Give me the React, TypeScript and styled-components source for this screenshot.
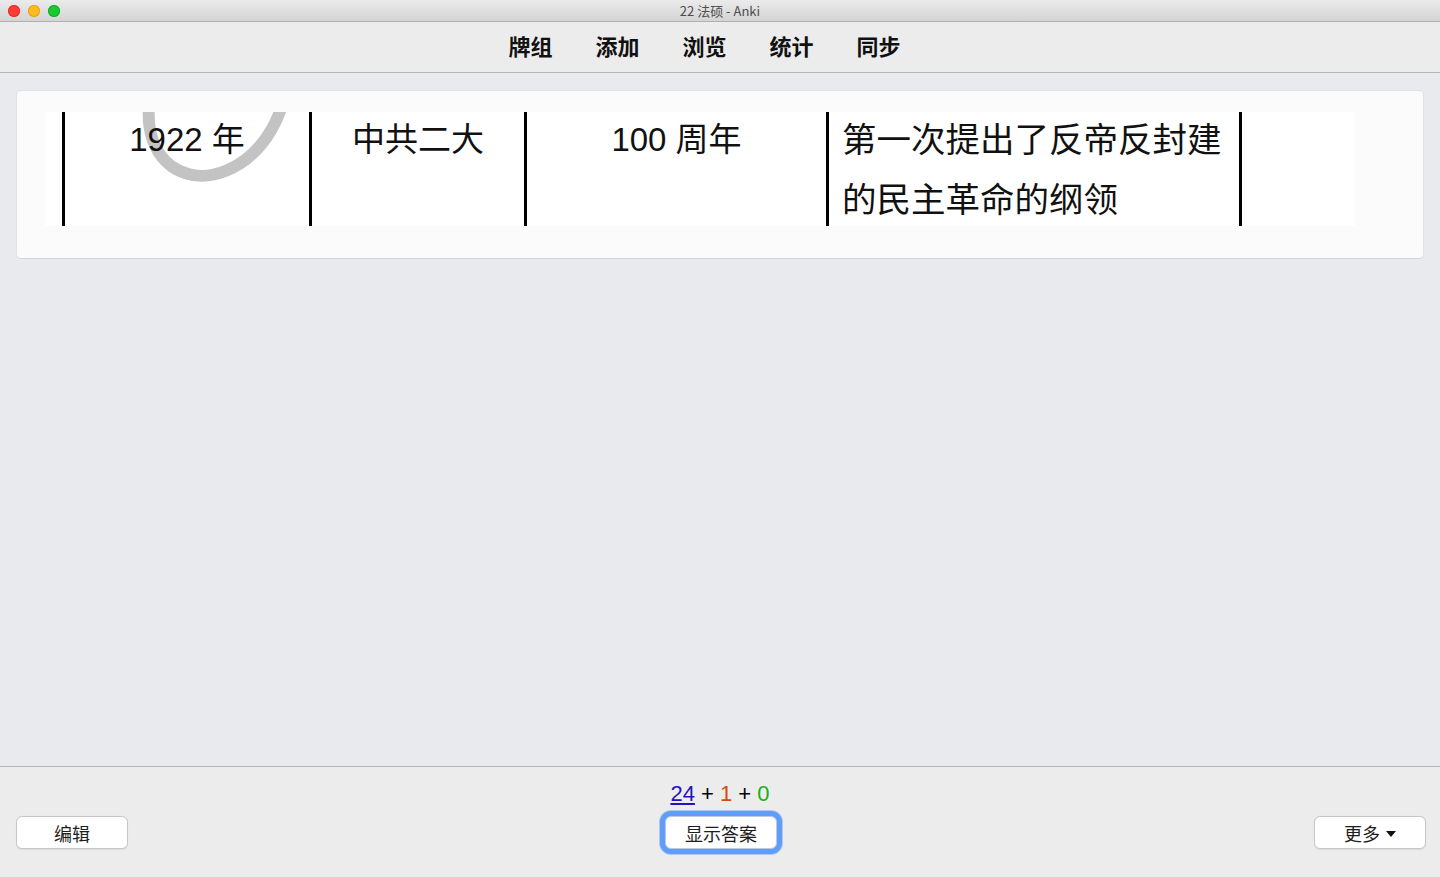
import React from "react";
import styled, { createGlobalStyle } from "styled-components";

const Global = createGlobalStyle`
  html, body { margin: 0; padding: 0; overflow: hidden; }
  body { font-family: "Noto Sans CJK SC", "Liberation Sans", sans-serif; }
  * { box-sizing: border-box; }
`;

const Window = styled.div`
  width: 1440px;
  height: 877px;
  display: flex;
  flex-direction: column;
  background: #ececec;
  font-family: "Noto Sans CJK SC", "Liberation Sans", sans-serif;
`;

const TitleBar = styled.div`
  height: 22px;
  flex: none;
  border-bottom: 1px solid #b0b0b0;
  background: linear-gradient(#ebebeb, #d4d4d4);
  display: grid;
  grid-template-columns: 1fr auto 1fr;
  align-items: center;
  padding: 0 8px;
`;

const Lights = styled.div`
  display: flex;
  gap: 8px;
  align-items: center;
`;

const Light = styled.span<{ $c: string; $b: string }>`
  width: 12px;
  height: 12px;
  border-radius: 50%;
  background: ${(p) => p.$c};
  box-shadow: inset 0 0 0 1px ${(p) => p.$b};
`;

const Title = styled.div`
  font-size: 13px;
  line-height: 21px;
  color: #4d4d4d;
`;

const Toolbar = styled.nav`
  height: 51px;
  flex: none;
  border-bottom: 1px solid #b5b5b5;
  display: flex;
  justify-content: center;
  align-items: center;
  gap: 43px;
  padding: 0 31px 4px 0;
`;

const NavItem = styled.span`
  font-size: 22px;
  font-weight: 700;
  line-height: 1;
  color: #111;
`;

const Main = styled.main`
  flex: 1;
  background: #e9eaed;
  padding: 17px 16px 0 16px;
`;

const Card = styled.section`
  background: #fbfbfb;
  border: 1px solid #e1e1e4;
  border-bottom-color: #d4d4d7;
  border-radius: 5px;
  padding: 21px 0 32px 28px;
`;

const CardImage = styled.div`
  width: 1310px;
  height: 114px;
  background: #ffffff;
  display: flex;
  padding-left: 17px;
  overflow: hidden;
`;

const Cell = styled.div<{ $w: number; $align: string; $size: number; $last?: boolean }>`
  position: relative;
  width: ${(p) => p.$w}px;
  height: 114px;
  flex: none;
  border-left: 3px solid #000;
  border-right: ${(p) => (p.$last ? "3px solid #000" : "none")};
  text-align: ${(p) => p.$align};
  padding-left: ${(p) => (p.$align === "left" ? 13 : 0)}px;
  font-family: "Liberation Sans", "Noto Sans CJK SC", sans-serif;
  font-size: ${(p) => p.$size}px;
  line-height: 60px;
  color: #111;
`;

const CellText = styled.div`
  position: relative;
  z-index: 1;
  margin-top: -2px;
`;

const Watermark = styled.svg`
  position: absolute;
  left: 0;
  top: 0;
  z-index: 0;
`;

const BottomBar = styled.footer`
  height: 111px;
  flex: none;
  border-top: 1px solid #b5b5b5;
  background: #ececec;
  display: grid;
  grid-template-columns: 1fr auto 1fr;
  align-items: end;
  padding: 0 14px 28px 16px;
`;

const Side = styled.div<{ $end?: boolean }>`
  display: flex;
  justify-content: ${(p) => (p.$end ? "flex-end" : "flex-start")};
`;

const Center = styled.div`
  display: flex;
  flex-direction: column;
  align-items: center;
  gap: 9px;
`;

const Counts = styled.div`
  font-family: "Liberation Sans", sans-serif;
  font-size: 22px;
  line-height: 26px;
  color: #000;
  white-space: pre;
  margin-right: 2px;
`;

const Count = styled.span<{ $color: string; $link?: boolean }>`
  color: ${(p) => p.$color};
  text-decoration: ${(p) => (p.$link ? "underline" : "none")};
  text-underline-offset: 2px;
`;

const Button = styled.button<{ $focus?: boolean }>`
  width: 112px;
  height: 33px;
  background: #fff;
  border: 1px solid ${(p) => (p.$focus ? "#b9c9e6" : "#c7c7c7")};
  border-radius: 6px;
  font-family: "Noto Sans CJK SC", sans-serif;
  font-size: 18px;
  line-height: 1;
  color: #1e1e1e;
  display: flex;
  align-items: center;
  justify-content: center;
  gap: 6px;
  padding: 0;
  box-shadow: ${(p) =>
    p.$focus
      ? "0 0 0 5px #5f9df7, 0 0 0 6px rgba(110,165,250,0.5)"
      : "0 0.5px 1px rgba(0,0,0,0.08)"};
`;

const Caret = styled.span`
  width: 0;
  height: 0;
  border-left: 5px solid transparent;
  border-right: 5px solid transparent;
  border-top: 6px solid #111;
  margin-top: 2px;
`;

export default function App() {
  return (
    <>
      <Global />
      <Window>
        <TitleBar>
          <Lights>
            <Light $c="#fd3b37" $b="#e0312c" />
            <Light $c="#fdbb1e" $b="#e0a316" />
            <Light $c="#19c92f" $b="#14ad27" />
          </Lights>
          <Title>22 法硕 - Anki</Title>
          <span />
        </TitleBar>
        <Toolbar>
          <NavItem>牌组</NavItem>
          <NavItem>添加</NavItem>
          <NavItem>浏览</NavItem>
          <NavItem>统计</NavItem>
          <NavItem>同步</NavItem>
        </Toolbar>
        <Main>
          <Card>
            <CardImage>
              <Cell $w={247} $align="center" $size={33}>
                <Watermark width="244" height="114" viewBox="0 0 244 114">
                  <ellipse
                    cx="152"
                    cy="-14"
                    rx="63"
                    ry="82"
                    fill="none"
                    stroke="#c3c3c3"
                    strokeWidth="12"
                    transform="rotate(30 152 -14)"
                  />
                </Watermark>
                <CellText>1922 年</CellText>
              </Cell>
              <Cell $w={215} $align="center" $size={33}>
                <CellText>中共二大</CellText>
              </Cell>
              <Cell $w={302} $align="center" $size={33}>
                <CellText>100 周年</CellText>
              </Cell>
              <Cell $w={416} $align="left" $size={34.5} $last>
                <CellText>
                  第一次提出了反帝反封建
                  <br />
                  的民主革命的纲领
                </CellText>
              </Cell>
            </CardImage>
          </Card>
        </Main>
        <BottomBar>
          <Side>
            <Button>编辑</Button>
          </Side>
          <Center>
            <Counts>
              <Count $color="#2412c2" $link>24</Count>
              {" + "}
              <Count $color="#cc4d0c">1</Count>
              {" + "}
              <Count $color="#12b312">0</Count>
            </Counts>
            <Button $focus>显示答案</Button>
          </Center>
          <Side $end>
            <Button>
              更多
              <Caret />
            </Button>
          </Side>
        </BottomBar>
      </Window>
    </>
  );
}
